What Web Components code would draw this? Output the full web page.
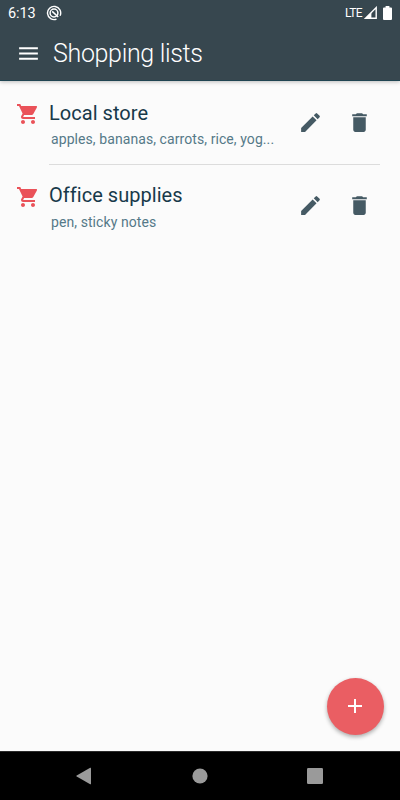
<!DOCTYPE html>
<html lang="en">
<head>
<meta charset="UTF-8">
<meta name="viewport" content="width=device-width, initial-scale=1">
<title>Shopping lists</title>
<style>
  html, body { height: 100%; }
  body {
    margin: 0;
    overflow: hidden;
    font-family: Roboto, "Liberation Sans", sans-serif;
  }
</style>
</head>
<body>
<shopping-app>
  <shopping-list name="Local store" items="apples, bananas, carrots, rice, yog..."></shopping-list>
  <shopping-list name="Office supplies" items="pen, sticky notes"></shopping-list>
</shopping-app>

<script>
class StatusBar extends HTMLElement {
  constructor() {
    super();
    this.attachShadow({ mode: 'open' });
  }

  connectedCallback() {
    this.shadowRoot.innerHTML = `
      <style>
        :host {
          display: flex;
          align-items: center;
          height: 25px;
          padding: 0 8px 0 8px;
          color: #fff;
        }
        .time { font-size: 14.5px; letter-spacing: -.1px; width: 38px; padding-top: 1px; }
        .net { margin-left: auto; font-size: 12px; letter-spacing: -.65px; }
        svg { display: block; }
        .signal { margin: 0 6px 0 2px; }
      </style>
      <span class="time">6:13</span>
      <svg width="16" height="16" viewBox="0 0 16 16" fill="none" stroke="#fff">
        <path d="M10.5 14.1a6.6 6.6 0 1 1 3.6-3.4" stroke-width="1.4"/>
        <circle cx="8" cy="8" r="3.9" stroke-width="1.5"/>
        <path d="M6.2 6.4l6 5.6" stroke-width="1.5"/>
      </svg>
      <span class="net">LTE</span>
      <svg class="signal" width="13" height="13" viewBox="0 0 13 13">
        <path fill="none" stroke="#fff" stroke-width="1.4" d="M1.6 12.2L12.2 1.6v10.6z"/>
        <path fill="#fff" d="M1 12.6L7.4 6.2v6.4z"/>
      </svg>
      <svg width="9" height="14" viewBox="0 0 9 14">
        <path fill="#fff" d="M2.6 0h3.8v1.4H8q1 0 1 1V13q0 1-1 1H1q-1 0-1-1V2.4q0-1 1-1h1.6z"/>
      </svg>
    `;
  }
}

class AppHeader extends HTMLElement {
  constructor() {
    super();
    this.attachShadow({ mode: 'open' });
  }

  connectedCallback() {
    this.shadowRoot.innerHTML = `
      <style>
        :host {
          display: block;
          height: 81px;
          box-sizing: border-box;
          background: #37474f;
          border-bottom: 1px solid #204552;
          box-shadow: 0 1px 4px rgba(0, 0, 0, .25);
        }
        .bar {
          display: flex;
          align-items: center;
          height: 56px;
          padding-left: 16px;
        }
        svg { display: block; width: 25px; height: 25px; }
        h1 {
          margin: 0 0 0 12px;
          font-size: 25px;
          font-weight: 300;
          letter-spacing: -.33px;
          color: #fff;
        }
      </style>
      <status-bar></status-bar>
      <div class="bar">
        <svg viewBox="0 0 24 24" fill="#fff"><path d="M3 18h18v-2H3v2zm0-5h18v-2H3v2zm0-7v2h18V6H3z"/></svg>
        <h1><slot></slot></h1>
      </div>
    `;
  }
}

class ShoppingList extends HTMLElement {
  constructor() {
    super();
    this.attachShadow({ mode: 'open' });
  }

  connectedCallback() {
    const name = this.getAttribute('name') || '';
    const items = this.getAttribute('items') || '';

    this.shadowRoot.innerHTML = `
      <style>
        :host {
          display: flex;
          align-items: flex-start;
          height: 82.5px;
          padding: 0 20px 0 16px;
        }
        svg { display: block; }
        .cart { width: 24px; height: 24px; margin: 12px 9px 0 0; fill: #ea5259; }
        .content {
          flex: 1;
          display: flex;
          height: 74px;
          border-bottom: 1px solid #dcdcdc;
        }
        :host(:last-of-type) .content { border-color: transparent; }
        .text { flex: 1; white-space: nowrap; }
        .name {
          margin-top: 9.5px;
          font-size: 20px;
          line-height: 26px;
          letter-spacing: .04px;
          color: #17394a;
        }
        .items {
          margin: 4.5px 0 0 2px;
          font-size: 14px;
          line-height: 18px;
          letter-spacing: .08px;
          color: #557988;
        }
        .actions { display: flex; gap: 24px; padding: 20px 8.5px 0 0; }
        .actions svg { width: 25px; height: 25px; fill: #455a64; }
      </style>
      <svg class="cart" viewBox="0 0 24 24"><path d="M7 18c-1.1 0-1.99.9-1.99 2S5.9 22 7 22s2-.9 2-2-.9-2-2-2zM1 2v2h2l3.6 7.59-1.35 2.45c-.16.28-.25.61-.25.96 0 1.1.9 2 2 2h12v-2H7.42c-.14 0-.25-.11-.25-.25l.03-.12.9-1.63h7.45c.75 0 1.41-.41 1.75-1.03l3.58-6.49A1 1 0 0 0 20 4H5.21l-.94-2H1zm16 16c-1.1 0-1.99.9-1.99 2s.89 2 1.99 2 2-.9 2-2-.9-2-2-2z"/></svg>
      <div class="content">
        <div class="text">
          <div class="name">${name}</div>
          <div class="items">${items}</div>
        </div>
        <div class="actions">
          <svg viewBox="0 0 24 24"><path d="M3 17.25V21h3.75L17.81 9.94l-3.75-3.75L3 17.25zM20.71 7.04a1 1 0 0 0 0-1.41l-2.34-2.34a1 1 0 0 0-1.41 0l-1.83 1.83 3.75 3.75 1.83-1.83z"/></svg>
          <svg viewBox="0 0 24 24"><path d="M6 19c0 1.1.9 2 2 2h8c1.1 0 2-.9 2-2V7H6v12zM19 4h-3.5l-1-1h-5l-1 1H5v2h14V4z"/></svg>
        </div>
      </div>
    `;
  }
}

class AddButton extends HTMLElement {
  constructor() {
    super();
    this.attachShadow({ mode: 'open' });
  }

  connectedCallback() {
    this.shadowRoot.innerHTML = `
      <style>
        :host {
          display: grid;
          place-items: center;
          width: 57px;
          height: 57px;
          box-sizing: border-box;
          padding: 0 1px 1px 0;
          border-radius: 50%;
          background: #ea5e63;
          box-shadow: 0 2px 4px rgba(0, 0, 0, .32);
        }
        svg { width: 24px; height: 24px; }
      </style>
      <svg viewBox="0 0 24 24"><path d="M19 13h-6v6h-2v-6H5v-2h6V5h2v6h6v2z" fill="#fff"/></svg>
    `;
  }
}

class NavBar extends HTMLElement {
  constructor() {
    super();
    this.attachShadow({ mode: 'open' });
  }

  connectedCallback() {
    this.shadowRoot.innerHTML = `
      <style>
        :host {
          display: flex;
          justify-content: space-between;
          align-items: center;
          height: 49px;
          padding: 0 77px 0 76px;
          box-sizing: border-box;
          border-top: 1px solid #2b2b2b;
          background: #000;
        }
        svg { display: block; fill: #9a9a9a; }
      </style>
      <svg width="16" height="18" viewBox="0 0 16 18"><path d="M14.2.8q.8-.4.8.5v15.4q0 .9-.8.5L.7 9.5q-.8-.5 0-1z"/></svg>
      <svg width="16" height="16" viewBox="0 0 16 16"><circle cx="8" cy="8" r="7.6"/></svg>
      <svg width="16" height="16" viewBox="0 0 16 16"><rect width="16" height="16" rx="1.2"/></svg>
    `;
  }
}

class ShoppingApp extends HTMLElement {
  constructor() {
    super();
    this.attachShadow({ mode: 'open' });
  }

  connectedCallback() {
    this.shadowRoot.innerHTML = `
      <style>
        :host {
          display: flex;
          flex-direction: column;
          height: 100vh;
          position: relative;
          background: #fbfbfb;
        }
        main { flex: 1; padding-top: 9px; }
        add-button { position: absolute; right: 16px; bottom: 65px; }
      </style>
      <app-header>Shopping lists</app-header>
      <main><slot></slot></main>
      <add-button></add-button>
      <nav-bar></nav-bar>
    `;
  }
}

customElements.define('status-bar', StatusBar);
customElements.define('app-header', AppHeader);
customElements.define('shopping-list', ShoppingList);
customElements.define('add-button', AddButton);
customElements.define('nav-bar', NavBar);
customElements.define('shopping-app', ShoppingApp);
</script>
</body>
</html>
